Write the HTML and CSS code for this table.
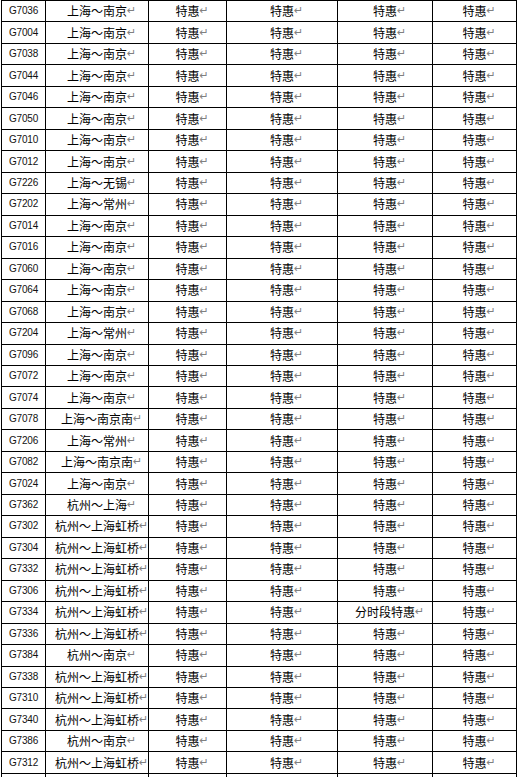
FILE: index.html
```html
<!DOCTYPE html>
<html lang="zh">
<head>
<meta charset="utf-8">
<title>列车特惠表</title>
<link rel="stylesheet" href="styles.css">
</head>
<body>
<table class="fares">
  <colgroup>
    <col class="c-no"><col class="c-route"><col class="c-a"><col class="c-b"><col class="c-c"><col class="c-d">
  </colgroup>
  <tbody>
    <tr><td class="no">G7036</td><td>上海～南京<span class="mk">↵</span></td><td>特惠<span class="mk">↵</span></td><td>特惠<span class="mk">↵</span></td><td>特惠<span class="mk">↵</span></td><td>特惠<span class="mk">↵</span></td></tr>
    <tr><td class="no">G7004</td><td>上海～南京<span class="mk">↵</span></td><td>特惠<span class="mk">↵</span></td><td>特惠<span class="mk">↵</span></td><td>特惠<span class="mk">↵</span></td><td>特惠<span class="mk">↵</span></td></tr>
    <tr><td class="no">G7038</td><td>上海～南京<span class="mk">↵</span></td><td>特惠<span class="mk">↵</span></td><td>特惠<span class="mk">↵</span></td><td>特惠<span class="mk">↵</span></td><td>特惠<span class="mk">↵</span></td></tr>
    <tr><td class="no">G7044</td><td>上海～南京<span class="mk">↵</span></td><td>特惠<span class="mk">↵</span></td><td>特惠<span class="mk">↵</span></td><td>特惠<span class="mk">↵</span></td><td>特惠<span class="mk">↵</span></td></tr>
    <tr><td class="no">G7046</td><td>上海～南京<span class="mk">↵</span></td><td>特惠<span class="mk">↵</span></td><td>特惠<span class="mk">↵</span></td><td>特惠<span class="mk">↵</span></td><td>特惠<span class="mk">↵</span></td></tr>
    <tr><td class="no">G7050</td><td>上海～南京<span class="mk">↵</span></td><td>特惠<span class="mk">↵</span></td><td>特惠<span class="mk">↵</span></td><td>特惠<span class="mk">↵</span></td><td>特惠<span class="mk">↵</span></td></tr>
    <tr><td class="no">G7010</td><td>上海～南京<span class="mk">↵</span></td><td>特惠<span class="mk">↵</span></td><td>特惠<span class="mk">↵</span></td><td>特惠<span class="mk">↵</span></td><td>特惠<span class="mk">↵</span></td></tr>
    <tr><td class="no">G7012</td><td>上海～南京<span class="mk">↵</span></td><td>特惠<span class="mk">↵</span></td><td>特惠<span class="mk">↵</span></td><td>特惠<span class="mk">↵</span></td><td>特惠<span class="mk">↵</span></td></tr>
    <tr><td class="no">G7226</td><td>上海～无锡<span class="mk">↵</span></td><td>特惠<span class="mk">↵</span></td><td>特惠<span class="mk">↵</span></td><td>特惠<span class="mk">↵</span></td><td>特惠<span class="mk">↵</span></td></tr>
    <tr><td class="no">G7202</td><td>上海～常州<span class="mk">↵</span></td><td>特惠<span class="mk">↵</span></td><td>特惠<span class="mk">↵</span></td><td>特惠<span class="mk">↵</span></td><td>特惠<span class="mk">↵</span></td></tr>
    <tr><td class="no">G7014</td><td>上海～南京<span class="mk">↵</span></td><td>特惠<span class="mk">↵</span></td><td>特惠<span class="mk">↵</span></td><td>特惠<span class="mk">↵</span></td><td>特惠<span class="mk">↵</span></td></tr>
    <tr><td class="no">G7016</td><td>上海～南京<span class="mk">↵</span></td><td>特惠<span class="mk">↵</span></td><td>特惠<span class="mk">↵</span></td><td>特惠<span class="mk">↵</span></td><td>特惠<span class="mk">↵</span></td></tr>
    <tr><td class="no">G7060</td><td>上海～南京<span class="mk">↵</span></td><td>特惠<span class="mk">↵</span></td><td>特惠<span class="mk">↵</span></td><td>特惠<span class="mk">↵</span></td><td>特惠<span class="mk">↵</span></td></tr>
    <tr><td class="no">G7064</td><td>上海～南京<span class="mk">↵</span></td><td>特惠<span class="mk">↵</span></td><td>特惠<span class="mk">↵</span></td><td>特惠<span class="mk">↵</span></td><td>特惠<span class="mk">↵</span></td></tr>
    <tr><td class="no">G7068</td><td>上海～南京<span class="mk">↵</span></td><td>特惠<span class="mk">↵</span></td><td>特惠<span class="mk">↵</span></td><td>特惠<span class="mk">↵</span></td><td>特惠<span class="mk">↵</span></td></tr>
    <tr><td class="no">G7204</td><td>上海～常州<span class="mk">↵</span></td><td>特惠<span class="mk">↵</span></td><td>特惠<span class="mk">↵</span></td><td>特惠<span class="mk">↵</span></td><td>特惠<span class="mk">↵</span></td></tr>
    <tr><td class="no">G7096</td><td>上海～南京<span class="mk">↵</span></td><td>特惠<span class="mk">↵</span></td><td>特惠<span class="mk">↵</span></td><td>特惠<span class="mk">↵</span></td><td>特惠<span class="mk">↵</span></td></tr>
    <tr><td class="no">G7072</td><td>上海～南京<span class="mk">↵</span></td><td>特惠<span class="mk">↵</span></td><td>特惠<span class="mk">↵</span></td><td>特惠<span class="mk">↵</span></td><td>特惠<span class="mk">↵</span></td></tr>
    <tr><td class="no">G7074</td><td>上海～南京<span class="mk">↵</span></td><td>特惠<span class="mk">↵</span></td><td>特惠<span class="mk">↵</span></td><td>特惠<span class="mk">↵</span></td><td>特惠<span class="mk">↵</span></td></tr>
    <tr><td class="no">G7078</td><td>上海～南京南<span class="mk">↵</span></td><td>特惠<span class="mk">↵</span></td><td>特惠<span class="mk">↵</span></td><td>特惠<span class="mk">↵</span></td><td>特惠<span class="mk">↵</span></td></tr>
    <tr><td class="no">G7206</td><td>上海～常州<span class="mk">↵</span></td><td>特惠<span class="mk">↵</span></td><td>特惠<span class="mk">↵</span></td><td>特惠<span class="mk">↵</span></td><td>特惠<span class="mk">↵</span></td></tr>
    <tr><td class="no">G7082</td><td>上海～南京南<span class="mk">↵</span></td><td>特惠<span class="mk">↵</span></td><td>特惠<span class="mk">↵</span></td><td>特惠<span class="mk">↵</span></td><td>特惠<span class="mk">↵</span></td></tr>
    <tr><td class="no">G7024</td><td>上海～南京<span class="mk">↵</span></td><td>特惠<span class="mk">↵</span></td><td>特惠<span class="mk">↵</span></td><td>特惠<span class="mk">↵</span></td><td>特惠<span class="mk">↵</span></td></tr>
    <tr><td class="no">G7362</td><td>杭州～上海<span class="mk">↵</span></td><td>特惠<span class="mk">↵</span></td><td>特惠<span class="mk">↵</span></td><td>特惠<span class="mk">↵</span></td><td>特惠<span class="mk">↵</span></td></tr>
    <tr><td class="no">G7302</td><td>杭州～上海虹桥<span class="mk">↵</span></td><td>特惠<span class="mk">↵</span></td><td>特惠<span class="mk">↵</span></td><td>特惠<span class="mk">↵</span></td><td>特惠<span class="mk">↵</span></td></tr>
    <tr><td class="no">G7304</td><td>杭州～上海虹桥<span class="mk">↵</span></td><td>特惠<span class="mk">↵</span></td><td>特惠<span class="mk">↵</span></td><td>特惠<span class="mk">↵</span></td><td>特惠<span class="mk">↵</span></td></tr>
    <tr><td class="no">G7332</td><td>杭州～上海虹桥<span class="mk">↵</span></td><td>特惠<span class="mk">↵</span></td><td>特惠<span class="mk">↵</span></td><td>特惠<span class="mk">↵</span></td><td>特惠<span class="mk">↵</span></td></tr>
    <tr><td class="no">G7306</td><td>杭州～上海虹桥<span class="mk">↵</span></td><td>特惠<span class="mk">↵</span></td><td>特惠<span class="mk">↵</span></td><td>特惠<span class="mk">↵</span></td><td>特惠<span class="mk">↵</span></td></tr>
    <tr><td class="no">G7334</td><td>杭州～上海虹桥<span class="mk">↵</span></td><td>特惠<span class="mk">↵</span></td><td>特惠<span class="mk">↵</span></td><td>分时段特惠<span class="mk">↵</span></td><td>特惠<span class="mk">↵</span></td></tr>
    <tr><td class="no">G7336</td><td>杭州～上海虹桥<span class="mk">↵</span></td><td>特惠<span class="mk">↵</span></td><td>特惠<span class="mk">↵</span></td><td>特惠<span class="mk">↵</span></td><td>特惠<span class="mk">↵</span></td></tr>
    <tr><td class="no">G7384</td><td>杭州～南京<span class="mk">↵</span></td><td>特惠<span class="mk">↵</span></td><td>特惠<span class="mk">↵</span></td><td>特惠<span class="mk">↵</span></td><td>特惠<span class="mk">↵</span></td></tr>
    <tr><td class="no">G7338</td><td>杭州～上海虹桥<span class="mk">↵</span></td><td>特惠<span class="mk">↵</span></td><td>特惠<span class="mk">↵</span></td><td>特惠<span class="mk">↵</span></td><td>特惠<span class="mk">↵</span></td></tr>
    <tr><td class="no">G7310</td><td>杭州～上海虹桥<span class="mk">↵</span></td><td>特惠<span class="mk">↵</span></td><td>特惠<span class="mk">↵</span></td><td>特惠<span class="mk">↵</span></td><td>特惠<span class="mk">↵</span></td></tr>
    <tr><td class="no">G7340</td><td>杭州～上海虹桥<span class="mk">↵</span></td><td>特惠<span class="mk">↵</span></td><td>特惠<span class="mk">↵</span></td><td>特惠<span class="mk">↵</span></td><td>特惠<span class="mk">↵</span></td></tr>
    <tr><td class="no">G7386</td><td>杭州～南京<span class="mk">↵</span></td><td>特惠<span class="mk">↵</span></td><td>特惠<span class="mk">↵</span></td><td>特惠<span class="mk">↵</span></td><td>特惠<span class="mk">↵</span></td></tr>
    <tr><td class="no">G7312</td><td>杭州～上海虹桥<span class="mk">↵</span></td><td>特惠<span class="mk">↵</span></td><td>特惠<span class="mk">↵</span></td><td>特惠<span class="mk">↵</span></td><td>特惠<span class="mk">↵</span></td></tr>
    <tr class="tail"><td></td><td></td><td></td><td></td><td></td><td></td></tr>
  </tbody>
</table>
</body>
</html>
```

FILE: styles.css
```css
html, body {
  margin: 0;
  padding: 0;
  background: #ffffff;
}

body {
  font-family: "Noto Sans CJK SC", "Liberation Sans", sans-serif;
  font-size: 12px;
  color: #000000;
}

.fares {
  border-collapse: collapse;
  table-layout: fixed;
  margin-left: 1px;
  width: 515px;
}

.c-no { width: 44px; }
.c-route { width: 103px; }
.c-a { width: 78px; }
.c-b { width: 111px; }
.c-c { width: 95px; }
.c-d { width: 84px; }

.fares tr {
  height: 21.47px;
}

.fares td {
  border: 1px solid #000000;
  padding: 0;
  text-align: center;
  vertical-align: middle;
  line-height: 14px;
  white-space: nowrap;
  overflow: hidden;
}

.fares td.no {
  font-family: "Liberation Sans", sans-serif;
  font-size: 10px;
  letter-spacing: -0.2px;
  color: #111111;
}

.mk {
  display: inline-block;
  width: 9px;
  margin-right: -9px;
  font-family: "DejaVu Sans", sans-serif;
  font-size: 11px;
  line-height: 14px;
  color: #808080;
  text-align: left;
  vertical-align: top;
}
```
